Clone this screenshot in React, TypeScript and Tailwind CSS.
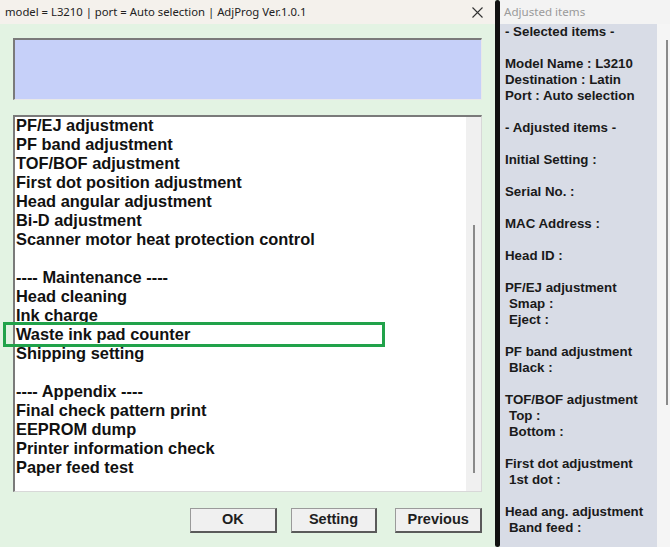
import React from 'react';

const listItems = [
  'PF/EJ adjustment',
  'PF band adjustment',
  'TOF/BOF adjustment',
  'First dot position adjustment',
  'Head angular adjustment',
  'Bi-D adjustment',
  'Scanner motor heat protection control',
  '',
  '---- Maintenance ----',
  'Head cleaning',
  'Ink charge',
  'Waste ink pad counter',
  'Shipping setting',
  '',
  '---- Appendix ----',
  'Final check pattern print',
  'EEPROM dump',
  'Printer information check',
  'Paper feed test',
];

// [text, indented]
const adjusted: [string, boolean][] = [
  ['- Selected items -', false],
  ['', false],
  ['Model Name : L3210', false],
  ['Destination : Latin', false],
  ['Port : Auto selection', false],
  ['', false],
  ['- Adjusted items -', false],
  ['', false],
  ['Initial Setting :', false],
  ['', false],
  ['Serial No. :', false],
  ['', false],
  ['MAC Address :', false],
  ['', false],
  ['Head ID :', false],
  ['', false],
  ['PF/EJ adjustment', false],
  ['Smap :', true],
  ['Eject :', true],
  ['', false],
  ['PF band adjustment', false],
  ['Black :', true],
  ['', false],
  ['TOF/BOF adjustment', false],
  ['Top :', true],
  ['Bottom :', true],
  ['', false],
  ['First dot adjustment', false],
  ['1st dot :', true],
  ['', false],
  ['Head ang. adjustment', false],
  ['Band feed :', true],
];

const WinButton = ({ label, className = '' }: { label: string; className?: string }) => (
  <button
    className={`flex h-[25px] w-[87px] items-center justify-center border-l border-t border-b-2 border-r-2 border-l-[#9a9a9a] border-t-[#9a9a9a] border-b-[#5a5a5a] border-r-[#5a5a5a] bg-[#f0f0f0] text-[14.5px] font-bold text-[#1e1e1e] ${className}`}
  >
    {label}
  </button>
);

export default function App() {
  return (
    <div
      className="flex h-[547px] w-[670px] overflow-hidden bg-[#e3f3e3]"
      style={{ fontFamily: '"Liberation Sans", Arial, sans-serif' }}
    >
      {/* Main AdjProg window */}
      <div className="relative flex w-[495px] flex-col">
        <div className="flex h-[24px] items-center justify-between bg-[#f4f1ec] pl-[5px] pr-[8px]">
          <span className="text-[11.3px] text-[#222]" style={{ fontFamily: '"Noto Sans", "Open Sans", sans-serif' }}>
            model = L3210 | port = Auto selection | AdjProg Ver.1.0.1
          </span>
          <svg width="11" height="11" viewBox="0 0 11 11" className="mr-[4px]">
            <path d="M0.5 0.5 L10.5 10.5 M10.5 0.5 L0.5 10.5" stroke="#333" strokeWidth="1.1" fill="none" />
          </svg>
        </div>

        <div className="flex flex-1 flex-col bg-[#e3f3e3] pl-[13px] pr-[13px]">
          <div className="mt-[14px] h-[62px] border-l-2 border-t-2 border-b border-r border-l-[#7a7a7a] border-t-[#7a7a7a] border-b-[#e8e8e8] border-r-[#e8e8e8] bg-[#c6d0f9]" />

          <div className="mt-[15px] flex h-[377px] border-l-2 border-t-2 border-b border-r border-l-[#7a7a7a] border-t-[#7a7a7a] border-b-[#d8d8d8] border-r-[#d8d8d8] bg-white">
            <div className="-mt-[1px] flex-1 pl-[1px] text-[16.4px] font-bold leading-[19px] text-[#111]">
              {listItems.map((t, i) => (
                <div key={i} className="h-[19px] whitespace-pre">
                  {t}
                </div>
              ))}
            </div>
            <div className="flex w-[15px] flex-col items-center bg-[#f0f0f0] pt-[108px]">
              <div className="h-[248px] w-[2px] bg-[#8a8a8a]" />
            </div>
          </div>

          <div className="mt-[16px] flex">
            <WinButton label="OK" className="ml-[177px]" />
            <WinButton label="Setting" className="ml-[14px]" />
            <WinButton label="Previous" className="ml-[18px]" />
          </div>
        </div>

        {/* highlight annotation */}
        <div className="absolute left-[3px] top-[322px] h-[25px] w-[382px] border-[3px] border-[#21a24a]" />
      </div>

      {/* window seam */}
      <div className="w-[5px] rounded-full bg-[#111]" />

      {/* Adjusted items window */}
      <div className="flex flex-1 flex-col bg-[#f3f3f3]">
        <div className="flex h-[24px] items-center pl-[4px]">
          <span className="text-[11.6px] text-[#9a9a9a]" style={{ fontFamily: '"Noto Sans", "Open Sans", sans-serif' }}>
            Adjusted items
          </span>
        </div>
        <div className="flex flex-1">
          <div className="flex-1 bg-[#d8dce6] pl-[5px] text-[13.3px] font-bold leading-[16px] text-[#1a1a1a]">
            {adjusted.map(([t, indent], i) => (
              <div key={i} className={`h-[16px] whitespace-pre ${indent ? 'pl-[4px]' : ''}`}>
                {t}
              </div>
            ))}
          </div>
          <div className="flex w-[13px] flex-col items-end bg-[#f5f5f5] pr-[2px] pt-[16px]">
            <div className="h-[365px] w-[2px] bg-[#8a8a8a]" />
          </div>
        </div>
      </div>
    </div>
  );
}
